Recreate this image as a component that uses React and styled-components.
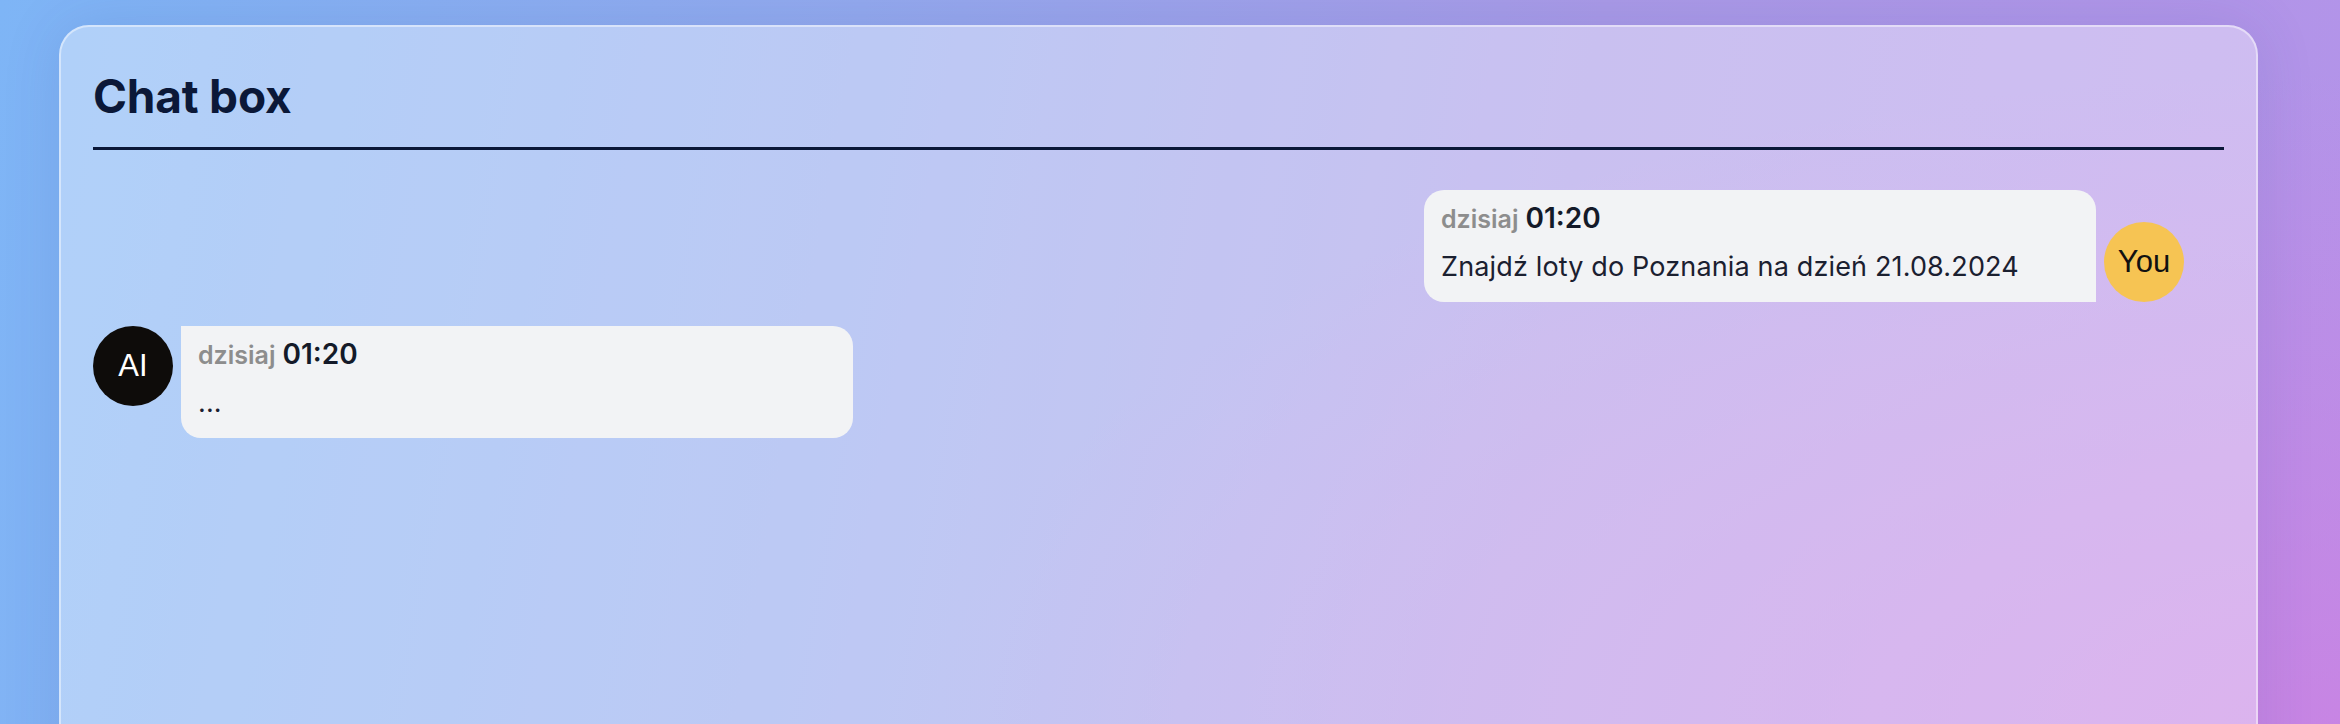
import styled, { createGlobalStyle } from "styled-components";

const GlobalStyle = createGlobalStyle`
  html, body {
    margin: 0;
    padding: 0;
    height: 100%;
    overflow: hidden;
  }
  body {
    font-family: Inter, "Noto Sans", sans-serif;
    background:
      radial-gradient(ellipse 60% 90% at 100% 100%, rgba(206, 128, 226, 0.75), rgba(206, 128, 226, 0) 100%),
      linear-gradient(100deg, #7eb5f6 0%, #93a9ee 35%, #a99ae7 65%, #b493e9 100%);
  }
`;

const messages = [
  {
    id: 1,
    author: "user",
    day: "dzisiaj",
    time: "01:20",
    text: "Znajdź loty do Poznania na dzień 21.08.2024",
  },
  {
    id: 2,
    author: "ai",
    day: "dzisiaj",
    time: "01:20",
    text: "...",
  },
];

const App = () => {
  return (
    <>
      <GlobalStyle />
      <PageStyled>
        <CardStyled>
          <Header>
            <h1>Chat box</h1>
          </Header>
          <MessageList>
            {messages.map((message) => (
              <Row key={message.id} $mine={message.author === "user"}>
                {message.author === "ai" && <Avatar $ai>AI</Avatar>}
                <Bubble $mine={message.author === "user"}>
                  <Meta>
                    <span className="day">{message.day}</span>
                    <span className="time">{message.time}</span>
                  </Meta>
                  <Text>{message.text}</Text>
                </Bubble>
                {message.author === "user" && <Avatar>You</Avatar>}
              </Row>
            ))}
          </MessageList>
        </CardStyled>
      </PageStyled>
    </>
  );
};

const PageStyled = styled.main`
  height: 100vh;
  box-sizing: border-box;
  padding: 25px 82px 0 59px;
  display: flex;
  align-items: flex-start;
`;

const CardStyled = styled.section`
  flex: 1;
  min-height: 780px;
  box-sizing: border-box;
  padding: 0 32px;
  border: 2px solid rgba(255, 255, 255, 0.45);
  border-radius: 30px;
  background: rgba(255, 255, 255, 0.38);
  box-shadow: 0 0 60px rgba(40, 60, 140, 0.12);
  display: flex;
  flex-direction: column;
`;

const Header = styled.header`
  padding-top: 42px;
  padding-bottom: 23px;
  border-bottom: 3px solid #0b1838;
  h1 {
    margin: 0;
    font-size: 46px;
    line-height: 1.2;
    font-weight: 700;
    color: #0b1838;
    letter-spacing: -0.2px;
  }
`;

const MessageList = styled.div`
  padding: 40px 40px 0 0;
  display: flex;
  flex-direction: column;
  gap: 24px;
`;

const Row = styled.div`
  display: flex;
  gap: 8px;
  justify-content: ${(p) => (p.$mine ? "flex-end" : "flex-start")};
  align-items: ${(p) => (p.$mine ? "flex-end" : "flex-start")};
`;

const Avatar = styled.div`
  width: 80px;
  height: 80px;
  flex-shrink: 0;
  border-radius: 50%;
  display: grid;
  place-items: center;
  font-family: "Liberation Sans", Arial, sans-serif;
  font-size: 31px;
  background-color: ${(p) => (p.$ai ? "#0e0c0a" : "#f6c453")};
  color: ${(p) => (p.$ai ? "#ffffff" : "#111111")};
`;

const Bubble = styled.div`
  width: 672px;
  height: 112px;
  box-sizing: border-box;
  padding: 10px 17px 0;
  background-color: #f2f3f5;
  border-radius: ${(p) => (p.$mine ? "20px 20px 0 20px" : "0 20px 20px 20px")};
`;

const Meta = styled.div`
  line-height: 36px;
  display: flex;
  align-items: baseline;
  gap: 7px;
  .day {
    font-size: 25px;
    font-weight: 600;
    color: #8d8d8d;
  }
  .time {
    font-size: 28px;
    font-weight: 600;
    color: #141a29;
  }
`;

const Text = styled.p`
  margin: 12px 0 0;
  font-size: 27px;
  line-height: 36px;
  letter-spacing: 0.15px;
  color: #1b2030;
`;

export default App;
